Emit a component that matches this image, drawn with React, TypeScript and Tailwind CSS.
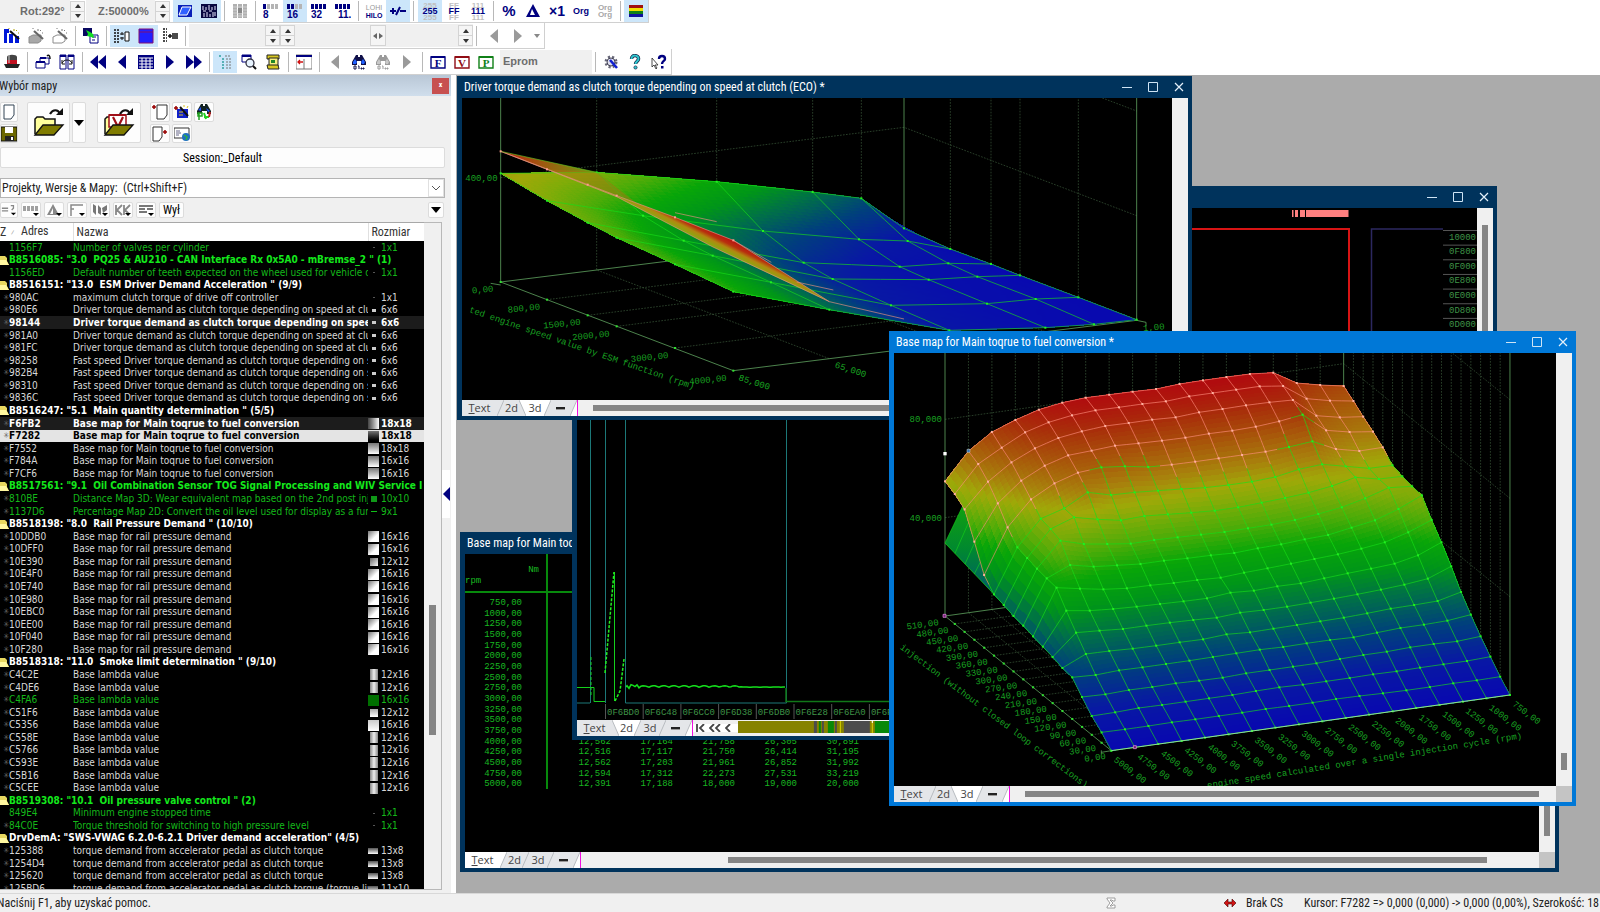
import type { ReactNode } from "react";

const NAVY = "#000080";

// ---------------------------------------------------------------- toolbar

function Icon({ children, size = "size-4" }: { children: ReactNode; size?: string }) {
  return (
    <svg viewBox="0 0 16 16" className={`${size} shrink-0`} aria-hidden="true">
      {children}
    </svg>
  );
}

function ToolButton({ label, on, children }: { label: string; on?: boolean; children: ReactNode }) {
  return (
    <button
      type="button"
      aria-label={label}
      className={`flex h-[22px] w-6 shrink-0 items-center justify-center ${on ? "bg-[#cce6fa]" : ""}`}
    >
      {children}
    </button>
  );
}

function Sep() {
  return (
    <span className="flex w-[7px] shrink-0 justify-center">
      <span className="h-5 w-px bg-[#b8b8b8]" />
    </span>
  );
}

function Spinner() {
  return (
    <span className="flex h-[21px] w-[15px] shrink-0 flex-col border border-[#d4d4d4] bg-[#f5f5f5]">
      <button type="button" aria-label="Up" className="flex flex-1 items-center justify-center border-b border-[#d4d4d4]">
        <svg viewBox="0 0 6 4" className="h-1 w-1.5"><path d="M0 4 3 0l3 4z" fill="#333" /></svg>
      </button>
      <button type="button" aria-label="Down" className="flex flex-1 items-center justify-center">
        <svg viewBox="0 0 6 4" className="h-1 w-1.5"><path d="M0 0 3 4l3-4z" fill="#333" /></svg>
      </button>
    </span>
  );
}

function Glyph({ lines, color = NAVY, size = 8 }: { lines: string[]; color?: string; size?: number }) {
  return (
    <svg viewBox="0 0 20 18" className="h-[18px] w-5" aria-hidden="true">
      {lines.map((l, k) => (
        <text
          key={k}
          x="10"
          y={9 + size * 0.36 + (k - (lines.length - 1) / 2) * 7}
          textAnchor="middle"
          fontSize={size}
          fontWeight="bold"
          fontFamily="Liberation Sans"
          fill={color}
        >
          {l}
        </text>
      ))}
    </svg>
  );
}

function Bits({ n, filled }: { n: string; filled: number }) {
  return (
    <svg viewBox="0 0 16 16" className="size-4" aria-hidden="true">
      {[0, 4, 8, 12].map((x, k) => (
        <path key={x} d={`M${x} 1h3v5h-3z`} fill={k < filled ? NAVY : "#b4b4b4"} />
      ))}
      <text x={n === "11." ? 3 : 0} y="15" fontSize="10" fontWeight="bold" fontFamily="Liberation Sans" fill={NAVY}>
        {n}
      </text>
    </svg>
  );
}

function Ghost({ text }: { text: string }) {
  return (
    <svg viewBox="0 0 20 20" className="size-5" aria-hidden="true">
      <g fontFamily="Liberation Sans" fontWeight="bold" textAnchor="middle">
        <text x="10" y="7" fontSize="8" fill="#c0c0c0">{text}</text>
        <text x="10" y="19" fontSize="8" fill="#c0c0c0">{text}</text>
        <text x="10" y="13" fontSize="9" fill={NAVY}>{text}</text>
      </g>
    </svg>
  );
}

function Letter({ c, color }: { c: string; color: string }) {
  return (
    <Icon>
      <path d="M1 3h14v11H1z" fill="#fff" stroke={color} strokeWidth="1.4" />
      <path d="M1 2h14v2H1z" fill={color} />
      <text x="8" y="13" textAnchor="middle" fontSize="11" fontWeight="bold" fontFamily="Liberation Serif" fill={color}>
        {c}
      </text>
    </Icon>
  );
}

function Binoculars({ gray, bits }: { gray?: boolean; bits?: boolean }) {
  const a = gray ? "#9a9a9a" : "#101048";
  const b = gray ? "#c8c8c8" : "#2060ff";
  return (
    <Icon>
      <path d="M5 1h2v2h2V1h2l4 7v3h-5V7H6v4H1V8z" fill={a} />
      <path d="M2 8l2-3 2 3-1 2H2zM10 8l2-3 2 3-1 2h-2z" fill={b} />
      {bits && <path d="M3 12h2v3H3zM7 12h1v3M10 14h1v1h-1zM12 14h1v1h-1z" stroke={a} strokeWidth="1" fill="none" />}
    </Icon>
  );
}

function Wand({ gray, back }: { gray?: boolean; back?: boolean }) {
  const c = gray ? "#8c8c8c" : "#0018d8";
  return (
    <Icon>
      {gray ? (
        <path d="M1 9 5 7h8v6l-3 2H1z" fill={back ? "#fff" : "#a8a8a8"} stroke={c} />
      ) : (
        <path d="M0 1h5v4H3v10H0zM5 6h4v9H5zM11 8h4v7h-4z" fill={c} />
      )}
      <path d="m6 3 9 8" stroke={gray ? "#666" : "#111"} strokeWidth="2.2" />
      <path d="M10 1v2M13 2l-1 1M15 5h-1M5 0v1" stroke={gray ? "#777" : "#b0a000"} />
    </Icon>
  );
}

function Arrow({ left, double, color = NAVY }: { left?: boolean; double?: boolean; color?: string }) {
  const d = double ? "M0 1l8 7-8 7zM8 1l8 7-8 7z" : "M4 1l8 7-8 7z";
  return (
    <Icon>
      <path d={d} fill={color} transform={left ? "matrix(-1 0 0 1 16 0)" : undefined} />
    </Icon>
  );
}

function Toolbars() {
  return (
    <header className="shrink-0 bg-white">
      <div className="flex">
        <div className="flex h-[23px] items-center border-r border-b border-[#d0d0d0]">
          <span className="flex h-[22px] w-[70px] items-center bg-[#f0f0f0] pl-5 text-[11px] font-bold text-[#6d6d6d]">
            Rot:292°
          </span>
          <Spinner />
          <span className="ml-px flex h-[22px] w-[69px] items-center bg-[#f0f0f0] pl-3 text-[11px] font-bold text-[#6d6d6d]">
            Z:50000%
          </span>
          <Spinner />
          <span className="w-[3px]" />
          <ToolButton label="Surface" on>
            <Icon>
              <path d="M1 2h14v12H1z" fill="#0a20b8" />
              <path d="M5 4h9l-4 8H2z" fill="#3060ff" stroke="#fff" strokeWidth="1" />
            </Icon>
          </ToolButton>
          <ToolButton label="Hexdump bars" on>
            <Icon>
              <path d="M0 1h16v14H0z" fill="#080840" />
              <path d="M2 3v4M5 4v3M8 2v5M11 4v3M14 3v4M2 8h3M8 8h3M3 10v4M6 9v5M9 11v3M12 9v5M14 9v4" stroke="#e8e8ff" />
            </Icon>
          </ToolButton>
          <Sep />
          <ToolButton label="Columns">
            <Icon>
              <path d="M1 1h4v14H1zM6 1h4v14H6zM11 1h4v14h-4z" fill="#b0b0b0" />
              <path d="M1 4h14M1 7h14M1 10h14M1 13h14" stroke="#ddd" strokeWidth=".7" />
              <path d="M6 5h4v5H6z" fill="#888" />
            </Icon>
          </ToolButton>
          <Sep />
          <ToolButton label="8 bit"><Bits n="8" filled={1} /></ToolButton>
          <ToolButton label="16 bit" on><Bits n="16" filled={2} /></ToolButton>
          <ToolButton label="32 bit"><Bits n="32" filled={4} /></ToolButton>
          <ToolButton label="Float"><Bits n="11." filled={4} /></ToolButton>
          <Sep />
          <ToolButton label="Low high order">
            <svg viewBox="0 0 20 18" className="h-[18px] w-5" aria-hidden="true">
              <g fontFamily="Liberation Sans" fontSize="7" textAnchor="middle">
                <text x="10" y="8" fill="#999">LOHI</text>
                <text x="10" y="16" fill={NAVY} fontWeight="bold">HILO</text>
              </g>
            </svg>
          </ToolButton>
          <ToolButton label="Signed" on>
            <Icon>
              <path d="M0 8h6M3 5v6M10 8h6M6 12l4-8" stroke={NAVY} strokeWidth="2" />
            </Icon>
          </ToolButton>
          <Sep />
          <span className="w-px" />
          <ToolButton label="Decimal" on><Ghost text="255" /></ToolButton>
          <ToolButton label="Hexadecimal"><Ghost text="FF" /></ToolButton>
          <ToolButton label="Binary"><Ghost text="111" /></ToolButton>
          <Sep />
          <ToolButton label="Percent"><Glyph lines={["%"]} size={15} /></ToolButton>
          <ToolButton label="Difference">
            <Icon>
              <path d="M8 1 1 14h14zM7 6l3 6H5z" fill={NAVY} fillRule="evenodd" />
            </Icon>
          </ToolButton>
          <ToolButton label="Factor"><Glyph lines={["×1"]} size={14} /></ToolButton>
          <ToolButton label="Original"><Glyph lines={["Org"]} size={9} /></ToolButton>
          <ToolButton label="Both originals"><Glyph lines={["Org", "Org"]} color="#a8a8a8" /></ToolButton>
          <Sep />
          <ToolButton label="Colours" on>
            <Icon>
              <path d="M1 2h14v3H1z" fill="#a01010" />
              <path d="M1 5h14v3H1z" fill="#f0e000" />
              <path d="M1 8h14v3H1z" fill="#108018" />
              <path d="M1 11h14v3H1z" fill="#1010a0" />
            </Icon>
          </ToolButton>
        </div>
      </div>

      <div className="flex">
        <div className="flex h-[26px] items-center border-r border-b border-[#d0d0d0]">
          <ToolButton label="Map wizard"><Wand /></ToolButton>
          <ToolButton label="Wizard 2"><Wand gray /></ToolButton>
          <ToolButton label="Wizard 3"><Wand gray back /></ToolButton>
          <Sep />
          <ToolButton label="Transfer">
            <Icon>
              <path d="M0 0h9v8H0z" fill="#080860" />
              <path d="M7 7h8v8H7z" fill="#fff" stroke={NAVY} />
              <path d="M9 9h4M9 12h3" stroke={NAVY} />
              <path d="m3 2 2 4-1 2 4 1 3 1-1-4-3-2z" fill="#10e020" />
            </Icon>
          </ToolButton>
          <Sep />
          <ToolButton label="Align" on>
            <Icon>
              <path d="M0 2h5M0 5h5M0 8h5M0 11h5M0 14h5" stroke="#111" strokeWidth="1.5" strokeDasharray="2 1" />
              <path d="M11 4h4v9h-4z" fill="#fff" stroke="#111" />
              <path d="M6 6h4M6 10h4M8 4v3M8 9v3" stroke="#111" />
            </Icon>
          </ToolButton>
          <ToolButton label="Frame" on>
            <Icon>
              <path d="M1 1h14v14H1z" fill="#2020ff" stroke="#801070" />
              <path d="M1 4h14" stroke="#801070" />
            </Icon>
          </ToolButton>
          <ToolButton label="Insert">
            <Icon>
              <path d="M1 1h4M1 4h4M1 7h4M1 10h4M1 13h4" stroke="#111" strokeWidth="1.5" strokeDasharray="2 1" />
              <path d="M6 8h4M8 6v4M11 5v6M13 5v6M15 5v6" stroke="#111" strokeWidth="1.5" />
            </Icon>
          </ToolButton>
          <Sep />
          <div className="flex h-[23px] items-center bg-[#f0f0f0]">
            <span className="w-[76px]" />
            <Spinner />
            <Spinner />
            <span className="w-[75px]" />
            <button type="button" aria-label="Shift" className="flex h-[21px] w-4 items-center justify-center border border-[#d4d4d4] bg-[#f5f5f5]">
              <svg viewBox="0 0 10 6" className="h-1.5 w-2.5"><path d="M4 0v6L0 3zM6 0v6l4-3z" fill="#666" /></svg>
            </button>
            <span className="w-[72px]" />
            <Spinner />
          </div>
          <Sep />
          <span className="w-0.5" />
          <ToolButton label="Back"><Arrow left color="#9a9a9a" /></ToolButton>
          <ToolButton label="Forward"><Arrow color="#9a9a9a" /></ToolButton>
          <button type="button" aria-label="History" className="flex w-[14px] justify-center">
            <svg viewBox="0 0 6 4" className="h-1 w-1.5"><path d="M0 0h6L3 4z" fill="#888" /></svg>
          </button>
        </div>
      </div>

      <div className="flex">
        <div className="flex h-[26px] items-center border-r border-b border-[#d0d0d0]">
          <ToolButton label="Magician">
            <Icon>
              <path d="M3 3c0-3 10-3 10 0v7H3z" fill="#444" />
              <path d="M3 6h10v4H3z" fill="#c01020" />
              <path d="M0 10h16l-2 4H2z" fill="#222" />
              <path d="M5 1v8" stroke="#ccc" />
            </Icon>
          </ToolButton>
          <Sep />
          <ToolButton label="New window">
            <Icon>
              <path d="M5 4h9v6H5z" fill="#fff" stroke={NAVY} />
              <path d="M1 8h9v6H1z" fill="#fff" stroke={NAVY} />
              <path d="M1 7h9v2H1zM5 3h6v2H5z" fill={NAVY} />
              <path d="M12 2c2-2 3 0 3 3" stroke="#111" strokeWidth="1.5" fill="none" />
            </Icon>
          </ToolButton>
          <ToolButton label="Swap windows">
            <Icon>
              <path d="M1 1h6v14H1zM9 1h6v14H9z" fill="#fff" stroke={NAVY} />
              <path d="M1 1h6v2H1zM9 1h6v2H9z" fill={NAVY} />
              <path d="M3 9c2-4 8-4 10 0M3 6v4h3M13 6v4h-3" stroke="#111" fill="none" />
            </Icon>
          </ToolButton>
          <Sep />
          <ToolButton label="First"><Arrow left double /></ToolButton>
          <ToolButton label="Previous"><Arrow left /></ToolButton>
          <ToolButton label="Grid">
            <Icon>
              <path d="M0 1h16v14H0z" fill={NAVY} />
              <path d="M1 4h14M1 7h14M1 10h14M1 13h14M4 4v11M8 4v11M12 4v11" stroke="#fff" />
            </Icon>
          </ToolButton>
          <ToolButton label="Next"><Arrow /></ToolButton>
          <ToolButton label="Last"><Arrow double /></ToolButton>
          <Sep />
          <ToolButton label="Map list" on>
            <Icon>
              <path d="M2 2h2M5 5h2M5 8h2M5 11h2M5 14h2" stroke="#30a0a0" strokeWidth="1.5" />
              <path d="M8 2h5M9 5h5M9 8h5M9 11h5M9 14h5" stroke="#777" strokeDasharray="2 1" />
            </Icon>
          </ToolButton>
          <ToolButton label="Search map">
            <Icon>
              <path d="M1 1h9v7H1z" fill="#fff" stroke={NAVY} />
              <path d="M1 1h9v2H1z" fill={NAVY} />
              <circle cx="9" cy="9" r="4" fill="#e8f4ff" stroke="#334" strokeWidth="1.3" />
              <path d="m12 12 3 3" stroke="#111" strokeWidth="2" />
            </Icon>
          </ToolButton>
          <ToolButton label="Notes">
            <Icon>
              <path d="M2 1h12v4H2z" fill="#d8c820" stroke="#222" />
              <path d="M4 4h9v8H4z" fill="#f8f080" stroke="#222" />
              <path d="M2 11h11l1 4H3z" fill="#d8c820" stroke="#222" />
              <path d="M6 6h4v3H6z" fill="#208828" />
            </Icon>
          </ToolButton>
          <Sep />
          <ToolButton label="Dock">
            <Icon>
              <path d="M0 1h16v14H0z" fill="#fff" stroke="#777" />
              <path d="M0 1h16v2H0z" fill={NAVY} />
              <path d="M8 5v10" stroke="#777" />
              <path d="M2 8h5M4 6 2 8l2 2" stroke="#d01010" strokeWidth="1.3" fill="none" />
            </Icon>
          </ToolButton>
          <Sep />
          <ToolButton label="Find previous"><Arrow left color="#9a9a9a" /></ToolButton>
          <ToolButton label="Find"><Binoculars bits /></ToolButton>
          <ToolButton label="Find again"><Binoculars gray bits /></ToolButton>
          <ToolButton label="Find next"><Arrow color="#9a9a9a" /></ToolButton>
          <Sep />
          <ToolButton label="File"><Letter c="F" color={NAVY} /></ToolButton>
          <ToolButton label="Version"><Letter c="V" color="#900c14" /></ToolButton>
          <ToolButton label="Project"><Letter c="P" color="#108018" /></ToolButton>
          <span className="ml-0.5 flex h-6 w-[92px] items-center bg-[#f0f0f0] pl-[3px] text-[11px] font-bold text-[#6d6d6d]">
            Eprom
          </span>
          <Sep />
          <ToolButton label="Settings">
            <Icon>
              <circle cx="8" cy="8" r="5" fill="none" stroke="#667" strokeWidth="3" strokeDasharray="2 2" />
              <circle cx="8" cy="8" r="4" fill="#dde" stroke="#445" />
              <path d="m7 6 7 8" stroke="#1020d0" strokeWidth="2.5" />
            </Icon>
          </ToolButton>
          <ToolButton label="Help">
            <Icon>
              <path d="M4.500 5c0-5 7.500-4 7 0-.2 2.500-3 2.500-3 5" stroke="#124" strokeWidth="3.400" fill="none" />
              <path d="M4.500 5c0-5 7.500-4 7 0-.2 2.500-3 2.500-3 5" stroke="#30c8d0" strokeWidth="2" fill="none" />
              <circle cx="8.500" cy="13.500" r="1.600" fill="#30c8d0" stroke="#124" strokeWidth=".7" />
            </Icon>
          </ToolButton>
          <ToolButton label="Context help">
            <Icon>
              <path d="M1 4v9l2-2 2 4 1-1-2-3h3z" fill="#fff" stroke="#222" strokeWidth=".8" />
              <path d="M8 5c0-4 6-4 6 0 0 2-3 2-3 5" stroke={NAVY} strokeWidth="2.400" fill="none" />
              <path d="M10 12h2.500v2.500H10z" fill={NAVY} />
            </Icon>
          </ToolButton>
        </div>
      </div>
    </header>
  );
}

// ---------------------------------------------------------------- map list

type Thumb = "none" | "dot" | "tiny" | "full" | "dark" | "down" | "rail" | "railSmall" | "tall" | "green" | "bar" | "solid" | "flat" | "dots" | "dash";
type Row = { group?: boolean; addr: string; name: string; size?: string; thumb?: Thumb; tone?: "green" | "bold" | "selected"; plain?: boolean };

const THUMBS: Record<Thumb, string> = {
  none: "size-0",
  dot: "mx-[5px] h-px w-0.5 bg-[#555]",
  tiny: "mx-1 h-[3px] w-1 bg-[#ccc]",
  full: "size-[11px] bg-linear-to-r from-[#444] to-white",
  dark: "size-[11px] bg-linear-to-b from-[#777] to-black",
  down: "size-[11px] bg-linear-to-b from-[#777] to-white",
  rail: "size-[11px] bg-linear-to-br from-[#777] to-white to-60%",
  railSmall: "ml-0.5 h-2 w-2 bg-linear-to-br from-[#666] to-white",
  tall: "ml-0.5 h-[11px] w-2 bg-linear-to-r from-[#888] via-[#eee] to-[#888]",
  green: "size-[11px] bg-[#007000]",
  bar: "h-1.5 w-[10px] bg-linear-to-b from-[#555] to-white",
  solid: "ml-0.5 h-2 w-2 bg-linear-to-b from-[#aaa] to-white",
  flat: "size-[11px] bg-linear-to-b from-[#ccc] to-white",
  dots: "ml-[3px] size-1.5 bg-[#109818]",
  dash: "ml-[3px] h-px w-1.5 bg-[#10c018]",
};

const CLUTCH = "Driver torque demand as clutch torque depending on speed at clut";
const FAST = "Fast speed Driver torque demand as clutch torque depending on sp";
const FUEL = "Base map for Main toqrue to fuel conversion";
const PEDAL = "torque demand from accelerator pedal as clutch torque";

const rail = ["10DDB0", "10DFF0", "10E390", "10E4F0", "10E740", "10E980", "10EBC0", "10EE00", "10F040", "10F280"];
const lambda: [string, string, Thumb][] = [
  ["C4C2E", "12x16", "tall"],
  ["C4DE6", "12x16", "tall"],
  ["C4FA6", "16x16", "green"],
  ["C51F6", "12x12", "solid"],
  ["C5356", "16x16", "flat"],
  ["C558E", "12x16", "tall"],
  ["C5766", "12x16", "tall"],
  ["C593E", "12x16", "tall"],
  ["C5B16", "12x16", "tall"],
  ["C5CEE", "12x16", "tall"],
];

const ROWS: Row[] = [
  { addr: "1156F7", name: "Number of valves per cylinder", size: "1x1", thumb: "dot", tone: "green", plain: true },
  { group: true, addr: "B8516085", name: '"3.0  PQ25 & AU210 - CAN Interface Rx 0x5A0 - mBremse_2 " (1)', tone: "green" },
  { addr: "1156ED", name: "Default number of teeth expected on the wheel used for vehicle dis", size: "1x1", thumb: "dot", tone: "green", plain: true },
  { group: true, addr: "B8516151", name: '"13.0  ESM Driver Demand Acceleration " (9/9)' },
  { addr: "980AC", name: "maximum clutch torque of drive off controller", size: "1x1", thumb: "dot" },
  { addr: "980E6", name: CLUTCH, size: "6x6", thumb: "tiny" },
  { addr: "98144", name: "Driver torque demand as clutch torque depending on spee", size: "6x6", thumb: "tiny", tone: "bold" },
  { addr: "981A0", name: CLUTCH, size: "6x6", thumb: "tiny" },
  { addr: "981FC", name: CLUTCH, size: "6x6", thumb: "tiny" },
  { addr: "98258", name: FAST, size: "6x6", thumb: "tiny" },
  { addr: "982B4", name: FAST, size: "6x6", thumb: "tiny" },
  { addr: "98310", name: FAST, size: "6x6", thumb: "tiny" },
  { addr: "9836C", name: FAST, size: "6x6", thumb: "tiny" },
  { group: true, addr: "B8516247", name: '"5.1  Main quantity determination " (5/5)' },
  { addr: "F6FB2", name: FUEL, size: "18x18", thumb: "full", tone: "bold" },
  { addr: "F7282", name: FUEL, size: "18x18", thumb: "dark", tone: "selected" },
  { addr: "F7552", name: FUEL, size: "18x18", thumb: "down" },
  { addr: "F784A", name: FUEL, size: "16x16", thumb: "down" },
  { addr: "F7CF6", name: FUEL, size: "16x16", thumb: "down" },
  { group: true, addr: "B8517561", name: '"9.1  Oil Combination Sensor TOG Signal Processing and WIV Service I', tone: "green" },
  { addr: "810BE", name: "Distance Map 3D: Wear equivalent map based on the 2nd post inje", size: "10x10", thumb: "dots", tone: "green" },
  { addr: "1137D6", name: "Percentage Map 2D: Convert the oil level used for display as a fun", size: "9x1", thumb: "dash", tone: "green" },
  { group: true, addr: "B8518198", name: '"8.0  Rail Pressure Demand " (10/10)' },
  ...rail.map((addr): Row => ({
    addr,
    name: "Base map for rail pressure demand",
    size: addr === "10E390" ? "12x12" : "16x16",
    thumb: addr === "10E390" ? "railSmall" : "rail",
  })),
  { group: true, addr: "B8518318", name: '"11.0  Smoke limit determination " (9/10)' },
  ...lambda.map(([addr, size, thumb]): Row => ({
    addr,
    name: "Base lambda value",
    size,
    thumb,
    tone: thumb === "green" ? "green" : undefined,
  })),
  { group: true, addr: "B8519308", name: '"10.1  Oil pressure valve control " (2)', tone: "green" },
  { addr: "849E4", name: "Minimum engine stopped time", size: "1x1", thumb: "dot", tone: "green", plain: true },
  { addr: "84C0E", name: "Torque threshold for switching to high pressure level", size: "1x1", thumb: "dot", tone: "green" },
  { group: true, addr: "DrvDemA", name: '"SWS-VWAG 6.2.0-6.2.1 Driver demand acceleration" (4/5)' },
  { addr: "125388", name: PEDAL, size: "13x8", thumb: "bar" },
  { addr: "1254D4", name: PEDAL, size: "13x8", thumb: "bar" },
  { addr: "125620", name: PEDAL, size: "13x8", thumb: "bar" },
  { addr: "125BD6", name: `${PEDAL} (torque lim`, size: "11x10", thumb: "bar" },
];

function rowTone(r: Row) {
  if (r.tone === "selected") return "bg-[#e4e4e4] text-black";
  if (r.tone === "bold") return "bg-[#1c1c1c] text-white";
  if (r.tone === "green") return r.group ? "text-[#14e81c]" : "text-[#14b81a]";
  return r.group ? "text-white" : "text-[#d8d8d8]";
}

function MapRow({ r }: { r: Row }) {
  const rowClass = `h-[13px] nth-[7n+2]:h-3 nth-[7n+4]:h-3 nth-[7n+6]:h-3 ${rowTone(r)}`;
  if (r.group) {
    return (
      <tr className={`${rowClass} font-bold`}>
        <td className="overflow-hidden p-0">
          <svg viewBox="0 0 9 11" className="block h-[11px] w-[9px]" aria-hidden="true">
            <path d="M0 1h5l2 2v3l2 4H0z" fill="#e8d860" />
            <path d="M0 5h6l3 5H0z" fill="#fff8a0" />
          </svg>
        </td>
        <td colSpan={4} className="overflow-hidden p-0 whitespace-pre">
          {r.addr}: {r.name}
        </td>
      </tr>
    );
  }
  const bold = r.tone === "bold" || r.tone === "selected";
  return (
    <tr className={`${rowClass} ${bold ? "font-bold" : ""}`}>
      <td className="overflow-hidden p-0 text-right text-[8px] text-[#666]">{r.plain ? "" : "✳"}</td>
      <td className="overflow-hidden p-0 whitespace-pre">{r.addr}</td>
      <td className="overflow-hidden p-0 whitespace-pre">{r.name}</td>
      <td className="overflow-hidden p-0">
        <span className={`block ${THUMBS[r.thumb ?? "none"]}`} />
      </td>
      <td className="overflow-hidden p-0 whitespace-pre">{r.size}</td>
    </tr>
  );
}

function Raised({ label, className, children }: { label: string; className: string; children: ReactNode }) {
  return (
    <button
      type="button"
      aria-label={label}
      className={`flex items-center justify-center rounded-xs border border-[#dcdcdc] bg-[#fdfdfd] ${className}`}
    >
      {children}
    </button>
  );
}

function BigFolder({ version }: { version?: boolean }) {
  return (
    <svg viewBox="0 0 32 30" className="h-[30px] w-8" aria-hidden="true">
      <path d="M2 26V11l2-2h6l2 2h10v6" fill="#ffff9c" stroke="#111" strokeWidth="1.5" />
      {version && (
        <>
          <path d="M6 7h17v12H6z" fill="#fff" stroke="#a01018" strokeWidth="1.5" />
          <path d="M6 6h17v2H6z" fill="#a01018" />
          <path d="m10 9 5 10 5-10" fill="none" stroke="#a01018" strokeWidth="2.2" />
        </>
      )}
      <path d="m2 27 8-10h20l-9 10z" fill="#807c00" stroke="#111" strokeWidth="1.3" />
      <path d="M17 6c3-5 8-5 10 0" fill="none" stroke="#111" strokeWidth="2.2" />
      <path d="M23 7h7V0z" fill="#111" />
    </svg>
  );
}

function FilterButton({ label, width, children }: { label: string; width: string; children: ReactNode }) {
  return (
    <Raised label={label} className={`h-4 ${width}`}>
      <svg viewBox="0 0 18 14" className="h-3.5 w-[18px]" aria-hidden="true">
        {children}
        <path d="M11 10h6l-3 3z" fill="#000" />
      </svg>
    </Raised>
  );
}

function MapPanel() {
  return (
    <aside className="flex w-[451px] shrink-0 flex-col bg-[#f0f0f0] text-xs text-[#222]">
      <div className="flex h-[21px] items-center justify-between bg-linear-to-b from-[#b9c7d6] to-[#d0deec]">
        <h2 className="-ml-px">Wybór mapy</h2>
        <button
          type="button"
          aria-label="Close panel"
          className="mr-0.5 flex h-4 w-[17px] items-center justify-center bg-[#c75050] text-[8px] font-bold text-white"
        >
          x
        </button>
      </div>
      <div className="flex gap-[2px] pt-[6px]">
        <div className="mr-[7px] flex w-[18px] flex-col gap-[2px]">
          <Raised label="New" className="h-5">
            <Icon><path d="M3 1h10v10l-3 4H3z" fill="#fff" stroke="#345" /></Icon>
          </Raised>
          <Raised label="Save" className="h-[19px]">
            <Icon>
              <path d="M0 1h16v14H0z" fill="#6c6800" stroke="#111" />
              <path d="M4 1h8v6H4z" fill="#fff" />
              <path d="M4 10h9v5H4z" fill="#222" />
              <path d="M10 11h2v3h-2z" fill="#fff" />
            </Icon>
          </Raised>
        </div>
        <Raised label="Open project" className="h-[41px] w-[43px]"><BigFolder /></Raised>
        <Raised label="Open menu" className="h-[41px] w-[14px]">
          <svg viewBox="0 0 10 6" className="h-1.5 w-2.5"><path d="M0 0h10L5 6z" /></svg>
        </Raised>
        <Raised label="Open version" className="ml-[9px] h-[41px] w-[44px]"><BigFolder version /></Raised>
        <div className="ml-[7px] grid grid-cols-3 gap-[2px]">
          <Raised label="Import" className="h-5 w-5">
            <Icon>
              <path d="M5 1h10v10l-3 4H5z" fill="#fff" stroke="#333" />
              <path d="M0 3h4M2 1v4" stroke="#900" strokeWidth="1.5" />
            </Icon>
          </Raised>
          <Raised label="Import wizard" className="h-5 w-5">
            <Icon>
              <path d="M3 5h11v9H3z" fill="#1020c8" />
              <path d="M6 3l8 9" stroke="#111" strokeWidth="2" />
              <path d="M0 4h4M2 2v4" stroke="#900" strokeWidth="1.5" />
              <path d="M10 1v2M14 2l-1 2M5 8h4M5 11h4" stroke="#d8c020" />
            </Icon>
          </Raised>
          <Raised label="Find projects" className="h-5 w-5">
            <Icon>
              <path d="M5 0h2v2h2V0h2l4 7v3h-4V7H6v3H1V7z" fill="#122" />
              <path d="M2 6l3-3v4zM10 4l4 3-2 1z" fill="#2050ff" />
              <path d="M2 9h4v3H2zM3 9v7" stroke="#20a020" strokeWidth="1.5" fill="#fff" />
              <path d="m8 9 2 6M8 13h5" stroke="#20d020" strokeWidth="2" />
              <path d="m14 8-1 5" stroke="#c02020" strokeWidth="2" />
            </Icon>
          </Raised>
          <Raised label="Export" className="h-[19px] w-5">
            <Icon>
              <path d="M1 1h9v10l-3 4H1z" fill="#fff" stroke="#333" />
              <path d="M11 6h4M13 4v4" stroke="#900" strokeWidth="1.5" />
            </Icon>
          </Raised>
          <Raised label="Send mail" className="h-[19px] w-5">
            <Icon>
              <path d="M0 2h15v10H0z" fill="#fff" stroke="#333" />
              <path d="M2 5h4M2 7h5M2 9h3" stroke="#668" />
              <circle cx="12" cy="11" r="4" fill="#2070c0" />
              <path d="M10 9l3 2-1 3" stroke="#30b040" strokeWidth="1.5" fill="none" />
            </Icon>
          </Raised>
        </div>
      </div>

      <div className="mr-1.5">
        <button type="button" className="mt-1 h-[21px] w-full rounded-xs border border-[#dcdcdc] bg-[#fdfdfd] text-center text-black">
          Session:_Default
        </button>
        <label className="mt-[10px] flex h-5 items-center border border-[#b4b4b4] bg-white">
          <input
            aria-label="Projekty, Wersje & Mapy"
            defaultValue="Projekty, Wersje & Mapy:  (Ctrl+Shift+F)"
            className="min-w-0 flex-1 bg-transparent pl-px outline-none"
          />
          <span className="flex h-full w-4 items-center justify-center border border-[#e0e0e0]">
            <svg viewBox="0 0 8 5" className="h-[5px] w-2"><path d="m0 0 4 4 4-4" fill="none" stroke="#555" /></svg>
          </span>
        </label>
        <div className="mt-[4px] flex gap-[3px]">
          <FilterButton label="Filter: query" width="w-[18px]">
            <path d="M1 5h7M1 8h7M11 2h3v3l-2 2" stroke="#888" strokeWidth="1.5" fill="none" />
          </FilterButton>
          <FilterButton label="Filter: type" width="w-5">
            <path d="M1 3h3v5H1zM5 3h3v5H5zM9 3h3v5H9zM13 3h3v5h-3z" fill="#a0a0a0" />
          </FilterButton>
          <FilterButton label="Filter: changed" width="w-5">
            <path d="M8 1 2 12h12zM8 5v6H5z" fill="#888" fillRule="evenodd" />
          </FilterButton>
          <FilterButton label="Filter: axis" width="w-5">
            <path d="M3 13V2h12M3 6h3" stroke="#888" strokeWidth="1.5" fill="none" />
          </FilterButton>
          <FilterButton label="Filter: map" width="w-5">
            <path d="M2 1l3 2v9L2 9zM7 2l3 3v7L7 10zM11 5l5-3v5l-4 3z" fill="#777" />
          </FilterButton>
          <FilterButton label="Filter: names" width="w-5">
            <path d="M2 2v10M8 2 3 7l5 5M10 2v10M16 2l-5 5 4 4" stroke="#888" strokeWidth="1.8" fill="none" />
          </FilterButton>
          <FilterButton label="Filter: size" width="w-5">
            <path d="M2 3h14M2 6h6M10 6h6M2 9h8" stroke="#777" strokeWidth="1.8" />
          </FilterButton>
          <button type="button" className="h-4 w-[25px] rounded-xs border border-[#dcdcdc] bg-[#fdfdfd] leading-[14px] text-black">
            Wył
          </button>
          <Raised label="More filters" className="mr-px ml-auto h-4 w-4">
            <svg viewBox="0 0 10 6" className="h-1.5 w-2.5"><path d="M0 0h10L5 6z" /></svg>
          </Raised>
        </div>
      </div>

      <div className="mt-1 flex min-h-0 flex-1">
        <div className="min-w-0 flex-1 overflow-hidden border-t border-[#a8a8a8] bg-black">
          <table className="w-full table-fixed border-collapse font-['DejaVu_Sans_Condensed',Tahoma,sans-serif] text-[10px] leading-3">
            <colgroup>
              <col className="w-[9px]" />
              <col className="w-[64px]" />
              <col className="w-[295px]" />
              <col className="w-[13px]" />
              <col />
            </colgroup>
            <thead>
              <tr className="h-4 bg-white text-left font-['Roboto_Condensed',sans-serif] text-xs text-[#333]">
                <th className="p-0 leading-4 font-normal">Z</th>
                <th className="border-r border-[#e0e0e0] p-0 leading-4 font-normal">
                  <span className="mr-1 ml-0.5 text-[8px] text-[#888]">⁄</span> Adres
                </th>
                <th className="border-r border-[#e0e0e0] p-0 pl-[3px] leading-4 font-normal">Nazwa</th>
                <th colSpan={2} className="p-0 pl-[3px] leading-4 font-normal">Rozmiar</th>
              </tr>
            </thead>
            <tbody>
              {ROWS.map((r) => (
                <MapRow key={r.addr} r={r} />
              ))}
            </tbody>
          </table>
        </div>
        <div className="flex w-[18px] flex-col items-center border-t border-r border-[#b8b8b8]">
          <span className="mt-[382px] h-[130px] w-[7px] bg-[#858585]" />
        </div>
        <div className="w-[9px] pt-[248px]">
          <button type="button" aria-label="Collapse panel" className="flex h-12 w-2 items-center justify-center bg-white">
            <svg viewBox="0 0 7 14" className="h-3.5 w-[7px]"><path d="M7 0v14L0 7z" fill={NAVY} /></svg>
          </button>
        </div>
      </div>
      <div className="mr-[9px] h-1 border-t border-[#b8b8b8]" />
    </aside>
  );
}

// ---------------------------------------------------------------- surfaces

type Stop = [number, number, number, number];
const RAMP: Stop[] = [
  [0, 8, 8, 176],
  [65, 8, 24, 164],
  [130, 0, 64, 124],
  [190, 0, 112, 72],
  [240, 0, 150, 24],
  [290, 8, 166, 8],
  [335, 76, 172, 8],
  [380, 128, 172, 8],
  [410, 160, 168, 8],
  [450, 168, 128, 12],
  [500, 168, 88, 10],
  [550, 168, 48, 10],
  [595, 176, 12, 14],
];

function heightColor(h: number) {
  const last = RAMP[RAMP.length - 1];
  const v = Math.max(0, Math.min(last[0], h));
  const k = Math.max(1, RAMP.findIndex((s) => s[0] >= v));
  const a = RAMP[k - 1];
  const b = RAMP[k];
  const t = (v - a[0]) / (b[0] - a[0]);
  return `rgb(${[1, 2, 3].map((c) => Math.round(a[c] + (b[c] - a[c]) * t)).join(",")})`;
}

type Vertex = { x: number; y: number; h: number; hot: boolean };

function mix(a: Vertex, b: Vertex, t: number): Vertex {
  return { x: a.x + (b.x - a.x) * t, y: a.y + (b.y - a.y) * t, h: a.h + (b.h - a.h) * t, hot: a.hot };
}

const GREEN_LINE = "#18e018";
const HOT_LINE = "#ff8c7c";

function Mesh({ grid, detail }: { grid: Vertex[][]; detail: number }) {
  const faces: ReactNode[] = [];
  const edges: ReactNode[] = [];
  const edge = (key: string, a: Vertex, b: Vertex) => {
    const m = mix(a, b, 0.5);
    edges.push(<path key={`${key}a`} d={`M${a.x} ${a.y}L${m.x} ${m.y}`} stroke={a.hot ? HOT_LINE : GREEN_LINE} />);
    edges.push(<path key={`${key}b`} d={`M${m.x} ${m.y}L${b.x} ${b.y}`} stroke={b.hot ? HOT_LINE : GREEN_LINE} />);
  };
  grid.forEach((row, j) =>
    row.forEach((v, i) => {
      if (i + 1 < row.length) edge(`r${i}-${j}`, v, row[i + 1]);
      if (j + 1 < grid.length) edge(`c${i}-${j}`, v, grid[j + 1][i]);
      if (i + 1 === row.length || j + 1 === grid.length) return;
      const at = (s: number, t: number) =>
        mix(mix(v, row[i + 1], s / detail), mix(grid[j + 1][i], grid[j + 1][i + 1], s / detail), t / detail);
      for (let t = 0; t < detail; t++) {
        for (let s = 0; s < detail; s++) {
          const q = [at(s, t), at(s + 1, t), at(s + 1, t + 1), at(s, t + 1)];
          const color = heightColor((q[0].h + q[1].h + q[2].h + q[3].h) / 4);
          faces.push(
            <polygon
              key={`${i}-${j}-${s}-${t}`}
              points={q.map((p) => `${p.x.toFixed(1)},${p.y.toFixed(1)}`).join(" ")}
              fill={color}
              stroke={color}
              strokeWidth="3"
            />
          );
        }
      }
    })
  );
  return (
    <>
      <g shapeRendering="crispEdges">{faces}</g>
      <g strokeWidth="2.4" opacity="0.8">{edges}</g>
      {grid.flat().map((v, k) => (
        <rect key={k} x={v.x - 3} y={v.y - 3} width="6" height="6" fill={v.hot ? "#ffb0a0" : "#20f020"} />
      ))}
    </>
  );
}

const FUEL_Y = [
  [469, 378, 321, 285, 254, 233, 218, 209, 200, 192, 177, 166, 156, 147, 143, 174, 180, 183],
  [507, 417, 368, 322, 292, 271, 256, 247, 237, 229, 214, 204, 194, 184, 183, 221, 227, 228],
  [553, 470, 412, 370, 339, 319, 303, 294, 284, 277, 262, 252, 241, 232, 225, 272, 277, 275],
  [650, 535, 467, 422, 391, 377, 362, 355, 347, 338, 326, 317, 305, 289, 269, 316, 321, 320],
  [750, 607, 523, 475, 443, 427, 424, 426, 419, 410, 400, 390, 380, 366, 349, 372, 378, 367],
  [808, 667, 581, 550, 502, 510, 502, 497, 492, 488, 480, 470, 456, 433, 418, 424, 430, 421],
  [840, 699, 612, 577, 583, 586, 573, 568, 563, 557, 547, 533, 519, 503, 483, 457, 462, 454],
  [873, 731, 647, 657, 657, 656, 645, 637, 629, 621, 610, 599, 585, 567, 547, 520, 488, 484],
  [902, 760, 720, 725, 721, 717, 707, 700, 691, 684, 670, 658, 643, 630, 608, 586, 552, 511],
  [934, 788, 791, 793, 790, 781, 774, 765, 758, 743, 730, 716, 702, 688, 671, 652, 622, 585],
  [965, 857, 857, 852, 845, 837, 829, 820, 803, 797, 784, 775, 760, 745, 731, 716, 691, 652],
  [996, 923, 917, 912, 902, 893, 885, 878, 863, 855, 845, 833, 821, 808, 794, 779, 761, 724],
  [1029, 987, 978, 971, 962, 952, 943, 928, 922, 911, 900, 889, 878, 865, 851, 840, 828, 801],
  [1057, 1050, 1036, 1027, 1017, 1007, 996, 985, 974, 966, 955, 945, 937, 923, 909, 899, 887, 869],
  [1116, 1108, 1095, 1086, 1075, 1067, 1058, 1045, 1035, 1025, 1015, 1002, 990, 980, 967, 957, 949, 934],
  [1173, 1162, 1149, 1140, 1130, 1120, 1110, 1098, 1087, 1079, 1069, 1059, 1048, 1039, 1028, 1018, 1008, 995],
  [1222, 1213, 1203, 1192, 1183, 1173, 1163, 1152, 1143, 1133, 1122, 1113, 1105, 1096, 1086, 1075, 1066, 1055],
  [1277, 1267, 1257, 1248, 1238, 1228, 1218, 1208, 1198, 1189, 1179, 1169, 1159, 1149, 1140, 1130, 1120, 1110],
];

const RPM = [5000, 4750, 4500, 4250, 4000, 3750, 3500, 3250, 3000, 2750, 2500, 2250, 2000, 1750, 1500, 1250, 1000, 750];

function isHot(i: number, j: number) {
  if (j < 3) return true;
  if (j === 3) return i !== 14;
  if (j === 4) return i < 5 || (i > 7 && i < 13) || i > 14;
  return false;
}

function FuelSurface() {
  const fx = (i: number, j: number) => 180 + 70.35 * i + 29.35 * j;
  const base = (i: number, j: number) => 873 - 9.82 * i + 23.76 * j;
  const grid = FUEL_Y.map((row, j) =>
    row.map((y, i) => ({ x: fx(i, j), y, h: base(i, j) - y, hot: isHot(i, j) }))
  );
  const steps = Array.from({ length: 18 }, (_, k) => k);
  return (
    <svg viewBox="27 84 1986 1299" preserveAspectRatio="xMinYMin slice" className="h-full w-full">
      <defs>
        <linearGradient id="fold" x1="0" y1="0" x2="0" y2="1">
          <stop offset="0" stopColor="#10a010" />
          <stop offset="0.5" stopColor="#008830" />
          <stop offset="1" stopColor="#005870" />
        </linearGradient>
      </defs>
      <g stroke="#3c5c3c" strokeWidth="2" strokeDasharray="5 4" fill="none">
        {steps.slice(1, 17).map((i) => <path key={`b${i}`} d={`M${fx(i, 0)} 0V${base(i, 0)}`} />)}
        {steps.slice(1, 17).map((j) => <path key={`s${j}`} d={`M${fx(17, j)} 0V${base(17, j)}`} />)}
        {steps.slice(1, 17).map((j) => <path key={`f${j}`} d={`M${fx(0, j)} ${base(0, j)}L${fx(17, j)} ${base(17, j)}`} />)}
        {steps.slice(1, 17).map((i) => <path key={`g${i}`} d={`M${fx(i, 0)} ${base(i, 0)}L${fx(i, 17)} ${base(i, 17)}`} />)}
        {[-13, 283, 578].map((y) => <path key={y} d={`M180 ${y}L${fx(17, 0)} ${y - 167}L${fx(17, 17)} ${y + 237}`} />)}
      </g>
      <g stroke="#5c9c5c" strokeWidth="2.5" fill="none">
        <path d={`M180 0V873L${fx(0, 17)} ${base(0, 17)}`} />
        <path d={`M180 873L${fx(17, 0)} ${base(17, 0)}V0`} />
        <path d={`M${fx(17, 17)} 0V1110`} />
        <path d="M679 1277l-30 5m0-6v12" />
      </g>
      {steps.map((j) => (
        <rect key={j} x={fx(0, j) - 3} y={base(0, j) - 3} width="6" height="6" fill="#30e030" />
      ))}
      <path d="M180 654 233 543l7 10 28 97 30 100 29 58z" fill="url(#fold)" />
      <path d="M180 654l53-111M210 685l44-100M240 717l28-62M268 747l20-40" stroke={GREEN_LINE} strokeWidth="2" opacity="0.8" />
      <path d="M180 654 327 808" stroke={GREEN_LINE} strokeWidth="2" />
      <Mesh grid={grid} detail={5} />
      <path d="M679 1277 1874 1110" stroke="#90e090" strokeWidth="3" />
      <path d="M175 381h10v10h-10z" fill="#fff" />
      <path d="M246 373h9v9h-9z" fill="#3070b0" stroke="#ccc" strokeWidth="1.5" />
      <path d="M174 868h9v9h-9zM745 1262h9v9h-9z" fill="#702070" stroke="#f090f0" strokeWidth="2" />
      <g fill="#18a020" fontFamily="Liberation Mono" fontSize="27">
        <text x="171" y="291" textAnchor="end">80,000</text>
        <text x="171" y="587" textAnchor="end">40,000</text>
        {steps.map((j) => (
          <text key={j} textAnchor="end" transform={`translate(${162 + 29.5 * j} ${900 + 23.6 * j}) rotate(-8)`}>
            {510 - 30 * j},00
          </text>
        ))}
        {RPM.map((n, i) => (
          <text key={n} transform={`translate(${685 + 70.35 * i} ${1308 - 9.82 * i}) rotate(37)`}>
            {n},00
          </text>
        ))}
        <text textAnchor="end" transform="translate(600 1389) rotate(37)">
          injection (without closed loop corrections)
        </text>
        <text textAnchor="end" transform="translate(1912 1240) rotate(-9)">
          engine speed calculated over a single injection cycle (rpm)
        </text>
      </g>
    </svg>
  );
}

const TORQUE_DX = [0, 288, 648, 936, 1082, 1210];
const TORQUE_OX = [0, 139, 261, 348, 523, 698];
const TORQUE_OY = [0, 53, 100, 133, 198, 266];
const TORQUE_Y = [
  [310, 307, 335, 366, 385, 475],
  [392, 437, 483, 508, 513, 537],
  [458, 512, 578, 590, 580, 582],
  [503, 557, 627, 629, 620, 616],
  [583, 637, 706, 701, 687, 682],
  [665, 719, 781, 773, 763, 749],
];

function TorqueSurface() {
  const tx = (i: number, j: number) => 152 + TORQUE_DX[i] + TORQUE_OX[j];
  const base = (i: number, j: number) => 636 - 0.125 * TORQUE_DX[i] + TORQUE_OY[j];
  const grid = TORQUE_Y.map((row, j) =>
    row.map((y, i) => ({ x: tx(i, j), y, h: (base(i, j) - y) * 1.3, hot: false }))
  );
  const labels: [string, number, number][] = [
    ["0,00", 131, 664],
    ["800,00", 271, 718],
    ["1500,00", 393, 764],
    ["2000,00", 480, 799],
    ["3000,00", 656, 864],
    ["4000,00", 831, 932],
  ];
  return (
    <svg viewBox="36 84 2130 906" preserveAspectRatio="xMinYMin slice" className="h-full w-full">
      <defs>
        <linearGradient id="flap" gradientUnits="userSpaceOnUse" x1="152" y1="244" x2="440" y2="320">
          <stop offset="0" stopColor="#c02010" />
          <stop offset="1" stopColor="#70a010" />
        </linearGradient>
        <linearGradient id="sliver" gradientUnits="userSpaceOnUse" x1="850" y1="511" x2="832" y2="547">
          <stop offset="0" stopColor="#b81010" />
          <stop offset="0.4" stopColor="#b8300e" />
          <stop offset="0.7" stopColor="#b08810" />
          <stop offset="1" stopColor="#90a410" />
        </linearGradient>
      </defs>
      <g stroke="#3c5c3c" strokeWidth="2" strokeDasharray="5 4" fill="none">
        {[1, 2, 3, 4].map((i) => (
          <path key={i} d={`M${tx(i, 0)} 0V${base(i, 0)}L${tx(i, 5)} ${base(i, 5)}`} />
        ))}
        {[1, 2, 3, 4].map((j) => (
          <path key={j} d={`M${tx(0, j)} ${base(0, j)}L${tx(5, j)} ${base(5, j)}V0`} />
        ))}
        <path d="M152 323 1362 172l698 265M1957 84l103 39" />
      </g>
      <g stroke="#5c9c5c" strokeWidth="2.5" fill="none">
        <path d="M152 0v636l698 266 1210-151V0M152 636l1210-151V0M122 640l30 5M2060 751l28 6v12" />
      </g>
      <path d="M152 244 440 307 560 400 500 377 413 344 291 298z" fill="url(#flap)" />
      <Mesh grid={grid} detail={14} />
      <path d="M291 298 440 307 560 400 500 377 413 344z" fill="#b07010" opacity="0.45" />
      <path d="M152 244 500 377 675 442 850 511 1138 695 964 614 789 531 500 380z" fill="url(#sliver)" />
      <path
        d="M152 244 500 377 675 442 850 511 1138 695M152 244 500 380 789 531 1138 695 1362 747M675 428 800 455M850 511 964 577M1040 636l110 24"
        fill="none"
        stroke="#e89080"
        strokeWidth="2"
      />
      <path d="M152 244 440 307" stroke="#60c020" strokeWidth="2" />
      {TORQUE_OX.map((o, k) => (
        <rect key={o} x={149 + o} y={[244, 298, 344, 377, 442, 511][k] - 3} width="6" height="6" fill="#ffa090" />
      ))}
      {TORQUE_OX.map((o, k) => (
        <rect key={o} x={149 + o} y={base(0, k) - 3} width="6" height="6" fill="#30e030" />
      ))}
      <g fill="#18a020" fontFamily="Liberation Mono" fontSize="27">
        <text x="143" y="333" textAnchor="end">400,00</text>
        {labels.map(([t, x, y]) => (
          <text key={t} textAnchor="end" transform={`translate(${x} ${y}) rotate(-6)`}>{t}</text>
        ))}
        <text transform="translate(864 930) rotate(18)">85,000</text>
        <text transform="translate(1153 892) rotate(18)">65,000</text>
        <text transform="translate(2080 784) rotate(-6)">1,00</text>
        <text textAnchor="end" transform="translate(730 958) rotate(19)">
          ted engine speed value by ESM function (rpm)
        </text>
      </g>
    </svg>
  );
}

// ---------------------------------------------------------------- 2d + text views

function Trace2d() {
  const ticks = ["0F6BD0", "0F6C48", "0F6CC0", "0F6D38", "0F6DB0", "0F6E28", "0F6EA0", "0F6F18"];
  const levels = ["10000", "0F800", "0F000", "0E800", "0E000", "0D800", "0D000"];
  let noise = "M626 687";
  for (let x = 627; x <= 786; x += 2) {
    const amp = x < 642 ? 2 : x < 742 ? 1.6 : 0.4;
    noise += `L${x} ${(687.3 - Math.abs(Math.sin(x * 0.31)) * amp + (x < 642 ? Math.sin(x * 2) * 1.5 : 0)).toFixed(1)}`;
  }
  return (
    <svg viewBox="577 208 900 512" preserveAspectRatio="xMinYMin slice" className="h-full w-full">
      <path d="M590.5 208V703M605.5 208V703M625.5 208V703H786.5V208M577 703h13" fill="none" stroke="#1c7878" />
      <path d="M577 687.5h17v14h11M614.5 572v129" fill="none" stroke="#14d01c" />
      <path d="M591 657v40" stroke="#14d01c" strokeDasharray="3 2" />
      <path d="M605 673l9-101M615 701l5-10 4-32" fill="none" stroke="#20f020" strokeWidth="1.5" strokeDasharray="3 1.5" />
      <path d={noise} fill="none" stroke="#14e01c" strokeWidth="1.5" />
      <path d="M786 688v13.5h600" fill="none" stroke="#107818" strokeWidth="1.5" />
      <path d="M1192 229h157v200" fill="none" stroke="#d81414" strokeWidth="2" />
      <path d="M1371.5 429V229H1443" fill="none" stroke="#2c2860" strokeWidth="1.5" />
      <path d="M1292 210h1.500v7h-1.500zM1295 210h3v7h-3zM1300 210h5v7h-5zM1306 210h42.500v7H1306z" fill="#ff8080" />
      <g fontFamily="Liberation Mono" fontSize="9" fill="#3f9447">
        {ticks.map((t, k) => (
          <g key={t}>
            <path d={`M${605.5 + 37.7 * k} 704v15`} stroke="#555" />
            <text x={607 + 37.7 * k} y="715">{t}</text>
          </g>
        ))}
        {levels.map((t, k) => (
          <g key={t}>
            <path d={`M1443 ${230.5 + 14.65 * k}h34`} stroke="#555" />
            <text x="1449" y={239.5 + 14.65 * k}>{t}</text>
          </g>
        ))}
      </g>
    </svg>
  );
}

const LOAD: Record<number, string[]> = {
  4000: ["12,562", "17,164", "21,758", "26,305", "30,891"],
  4250: ["12,516", "17,117", "21,750", "26,414", "31,195"],
  4500: ["12,562", "17,203", "21,961", "26,852", "31,992"],
  4750: ["12,594", "17,312", "22,273", "27,531", "33,219"],
  5000: ["12,391", "17,188", "18,000", "19,000", "20,000"],
};

function FuelTable() {
  return (
    <table className="w-full table-fixed border-collapse font-['Liberation_Mono',monospace] text-[9px] leading-[10px] text-[#18b820]">
      <colgroup>
        <col className="w-[82px]" />
        <col className="w-[64px]" />
        <col className="w-[62px]" />
        <col className="w-[62px]" />
        <col className="w-[62px]" />
        <col className="w-[62px]" />
        <col />
      </colgroup>
      <thead>
        <tr className="h-[38px] border-b-2 border-[#078a0c]">
          <th className="border-r-2 border-[#078a0c] p-0 pb-[5px] align-bottom font-normal">
            <span className="block pr-[7px] text-right">Nm</span>
            <span className="block pt-px text-left">rpm</span>
          </th>
          <th colSpan={6} />
        </tr>
      </thead>
      <tbody>
        {[...RPM].reverse().map((n) => (
          <tr key={n} className="h-[11px] nth-[3n]:h-[10px] first:*:pt-[5px]">
            <th className="border-r-2 border-[#078a0c] p-0 pr-[24px] text-right font-normal">{n},00</th>
            {(LOAD[n] ?? ["", "", "", "", ""]).map((v, k) => (
              <td key={k} className="p-0 text-right">{v}</td>
            ))}
            <td />
          </tr>
        ))}
      </tbody>
    </table>
  );
}

// ---------------------------------------------------------------- windows

function Slant({ back, left, right }: { back?: boolean; left: boolean; right: boolean }) {
  const l = left ? "#fff" : "#e4e6e9";
  const r = right ? "#fff" : "#e4e6e9";
  return (
    <svg viewBox="0 0 7 16" className="h-4 w-[7px] shrink-0" aria-hidden="true">
      <path d="M0 0h7v16H0z" fill={r} />
      <path d={back ? "M0 0v16h7z" : "M0 0h7L0 16z"} fill={l} />
      <path d={back ? "M0 0l7 16" : "M7 0 0 16"} stroke="#b8bcc0" />
    </svg>
  );
}

function Tabs({ current }: { current: number }) {
  const tone = (k: number) => (k === current ? "bg-white" : "bg-[#e4e6e9]");
  const tab = "flex h-4 items-center justify-center text-[#444]";
  return (
    <div className="flex w-[116px] shrink-0 border-r border-[#f010e0] font-['Open_Sans',sans-serif] text-[11px]">
      <button type="button" className={`${tab} w-[35px] ${tone(0)}`}>
        <span className="underline underline-offset-1">T</span>ext
      </button>
      <Slant back={current === 1} left={current === 0} right={current === 1} />
      <button type="button" className={`${tab} w-[15px] ${tone(1)}`}>2d</button>
      <Slant back={current === 2} left={current === 1} right={current === 2} />
      <button type="button" className={`${tab} w-[18px] ${tone(2)}`}>3d</button>
      <Slant left={current === 2} right={false} />
      <button type="button" aria-label="Split" className={`${tab} w-[19px] ${tone(3)}`}>
        <span className="h-[3px] w-[9px] border-b border-[#999] bg-[#222]" />
      </button>
      <Slant left={false} right />
    </div>
  );
}

type WindowProps = {
  title: string;
  place: string;
  active?: boolean;
  tab: number;
  vThumb?: string;
  footer: ReactNode;
  children: ReactNode;
};

function MapWindow({ title, place, active, tab, vThumb, footer, children }: WindowProps) {
  const ctl = "flex h-[22px] w-[26px] items-center justify-center";
  return (
    <section
      className={`absolute flex flex-col pr-1 pb-1 pl-[5px] ${place} ${active ? "bg-[#0078d7]" : "bg-[#00335c]"}`}
    >
      <div className="flex h-[22px] shrink-0 items-center text-white">
        <h3 className="min-w-0 flex-1 truncate pl-0.5 text-xs">{title}</h3>
        <div className="-mr-1 flex">
          <button type="button" aria-label="Minimize" className={ctl}>
            <svg viewBox="0 0 10 10" className="size-2.5"><path d="M0 5.5h10" stroke="#cfe4f4" /></svg>
          </button>
          <button type="button" aria-label="Maximize" className={ctl}>
            <svg viewBox="0 0 10 10" className="size-2.5"><path d="M.5.5h9v9h-9z" fill="none" stroke="#cfe4f4" /></svg>
          </button>
          <button type="button" aria-label="Close" className={ctl}>
            <svg viewBox="0 0 10 10" className="size-2.5"><path d="m1 1 8 8m0-8-8 8" stroke="#e4f0fa" strokeWidth="1.2" /></svg>
          </button>
        </div>
      </div>
      <div className="flex min-h-0 flex-1">
        <div className="min-w-0 flex-1 overflow-hidden bg-black">{children}</div>
        <div className="flex w-4 shrink-0 flex-col items-center bg-[#f0f0f0]">
          {vThumb && <span className={`w-1.5 bg-[#858585] ${vThumb}`} />}
        </div>
      </div>
      <div className="flex h-4 shrink-0 bg-[#f0f0f0]">
        <Tabs current={tab} />
        <div className="flex min-w-0 flex-1 items-center">{footer}</div>
        <span className="w-4 shrink-0 bg-[#c4c4c4]" />
      </div>
    </section>
  );
}

function HexStrip() {
  return (
    <>
      <div className="flex w-[45px] shrink-0 items-center gap-1 bg-white pl-[3px]">
        <button type="button" aria-label="Start">
          <svg viewBox="0 0 9 8" className="h-2 w-[9px]"><path d="M1 0v8M8 0 4 4l4 4" stroke="#444" strokeWidth="1.8" fill="none" /></svg>
        </button>
        <button type="button" aria-label="Page back">
          <svg viewBox="0 0 12 8" className="h-2 w-3"><path d="M5 0 1 4l4 4M11 0 7 4l4 4" stroke="#444" strokeWidth="1.8" fill="none" /></svg>
        </button>
        <button type="button" aria-label="Step back">
          <svg viewBox="0 0 6 8" className="h-2 w-1.5"><path d="M5 0 1 4l4 4" stroke="#444" strokeWidth="1.8" fill="none" /></svg>
        </button>
      </div>
      <svg viewBox="0 0 740 16" preserveAspectRatio="none" className="h-4 min-w-0 flex-1" aria-hidden="true">
        <path d="M0 1h740v12H0z" fill="#868200" />
        <path d="M76 1h3v12h-3zM84 1h2v12h-2zM97 1h2v12h-2zM106 1h26v12h-26z" fill="#4c4c4c" />
        <path d="M81 1h2v12h-2zM90 1h6v12h-6zM137 1h603v12H137z" fill="#088808" />
        <path d="M102 1h1v12h-1zM134 1h1v12h-1z" fill="#d8d000" />
        <path d="M79 0h4v1h-4zM134 0h1v3h-1z" fill="#fff" />
      </svg>
    </>
  );
}

export default function App() {
  return (
    <div className="flex h-screen flex-col overflow-hidden bg-white font-['Roboto_Condensed','DejaVu_Sans_Condensed',sans-serif]">
      <div className="font-['Liberation_Sans',Arial,sans-serif]">
        <Toolbars />
      </div>

      <main className="flex min-h-0 flex-1 gap-[5px]">
        <MapPanel />

        <div className="relative min-w-0 flex-1 overflow-hidden bg-[#ababab]">
          <MapWindow
            title="Base map for Main toqrue to fuel conversion *"
            place="top-[457px] left-1 h-[340px] w-[1099px]"
            tab={0}
            vThumb="mt-10 h-[242px]"
            footer={<span className="mr-[52px] ml-[147px] h-1.5 flex-1 bg-[#858585]" />}
          >
            <FuelTable />
          </MapWindow>
          <MapWindow
            title=""
            place="top-[111px] left-[116px] h-[554px] w-[925px]"
            tab={1}
            vThumb="mt-[17px] h-[300px]"
            footer={<HexStrip />}
          >
            <Trace2d />
          </MapWindow>
          <MapWindow
            title="Driver torque demand as clutch torque depending on speed at clutch (ECO) *"
            place="top-px left-px h-[344px] w-[735px]"
            tab={2}
            footer={<span className="mr-4 ml-[15px] h-1.5 flex-1 bg-[#858585]" />}
          >
            <TorqueSurface />
          </MapWindow>
          <MapWindow
            title="Base map for Main toqrue to fuel conversion *"
            place="top-[256px] left-[433px] h-[475px] w-[687px]"
            active
            tab={2}
            vThumb="mt-[400px] h-[17px]"
            footer={<span className="mr-[17px] ml-[15px] h-1.5 flex-1 bg-[#858585]" />}
          >
            <FuelSurface />
          </MapWindow>
        </div>
      </main>

      <footer className="flex h-[19px] shrink-0 items-center overflow-hidden border-t border-[#d8d8d8] bg-[#f0f0f0] text-xs whitespace-pre text-[#222]">
        <span className="-ml-[3px] min-w-0 flex-1">Naciśnij F1, aby uzyskać pomoc.</span>
        <span className="w-[114px] shrink-0">
          <svg viewBox="0 0 10 12" className="h-3 w-2.5" aria-hidden="true">
            <path d="M1 1h8v3H7L6 3H4l3 3-3 3h2l1-1h2v3H1v-1l3-4-3-4z" fill="#fff" stroke="#888" strokeWidth=".8" />
          </svg>
        </span>
        <span className="flex w-[84px] shrink-0 items-center gap-[10px] pl-1">
          <svg viewBox="0 0 12 8" className="h-2 w-3" aria-hidden="true">
            <path d="M0 4 4 0v3h4V0l4 4-4 4V5H4v3z" fill="#d01414" stroke="#400" strokeWidth=".6" />
          </svg>
          Brak CS
        </span>
        <span className="w-[296px] shrink-0 overflow-hidden">
          Kursor: F7282 =&gt; 0,000 (0,000) -&gt; 0,000 (0,00%), Szerokość: 18
        </span>
      </footer>
    </div>
  );
}
